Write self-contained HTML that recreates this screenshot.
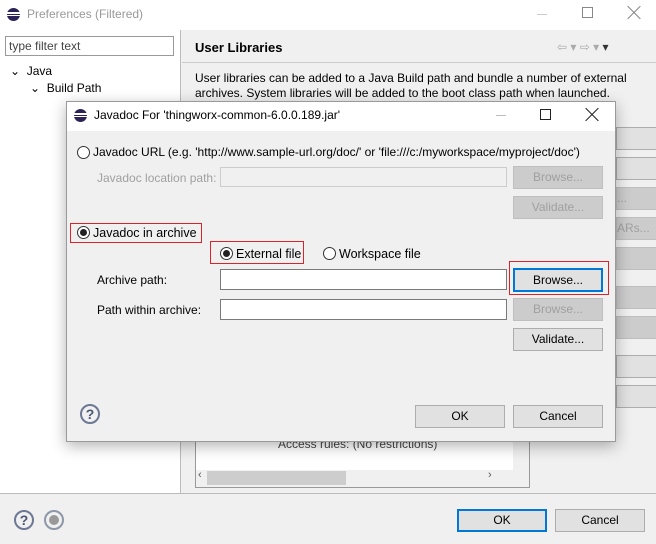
<!DOCTYPE html>
<html><head><style>
*{box-sizing:border-box;margin:0;padding:0}
body{width:656px;height:544px;position:relative;background:#f0f0f0;font-family:"Liberation Sans",sans-serif;font-size:12px;color:#000;overflow:hidden}
.a{position:absolute}
.btn{position:absolute;background:#e1e1e1;border:1px solid #adadad;text-align:center;line-height:21px;font-size:12px}
.dis{color:#a0a0a0;background:#cccccc;border-color:#bfbfbf}
.inp{position:absolute;background:#fff;border:1px solid #7a7a7a;height:22px}
.rad{position:absolute;width:13px;height:13px;border:1px solid #333;border-radius:50%;background:#fff}
.rad.on::after{content:"";position:absolute;left:2px;top:2px;width:7px;height:7px;border-radius:50%;background:#222}
.red{position:absolute;border:1px solid #d9242b}
.help{position:absolute;width:20px;height:20px;border:2px solid #6d7894;border-radius:50%;color:#4a5573;font-weight:bold;font-size:14px;text-align:center;line-height:17px}
.x{position:absolute;width:14px;height:14px}
.x::before,.x::after{content:"";position:absolute;left:-2px;top:6px;width:18px;height:1px;background:currentColor;transform:rotate(45deg)}
.x::after{transform:rotate(-45deg)}
</style></head><body>
<div class="a" style="left:0;top:0;width:656px;height:30px;background:#fff"></div>
<div class="a" style="left:7px;top:8px;width:13px;height:13px;border-radius:50%;background:#2c2255"><div class="a" style="left:0;top:4px;width:13px;height:2px;background:#fff"></div><div class="a" style="left:0;top:7px;width:13px;height:1px;background:#fff"></div></div>
<div class="a" style="left:27px;top:7px;color:#999;font-size:12px">Preferences (Filtered)</div>
<div class="a" style="left:537px;top:14px;width:10px;height:1px;background:#ccc"></div>
<div class="a" style="left:582px;top:7px;width:11px;height:11px;border:1px solid #888"></div>
<div class="x" style="left:627px;top:6px;color:#888"></div>
<div class="a" style="left:0;top:30px;width:181px;height:463px;background:#fff;border-right:1px solid #bbb"></div>
<div class="a" style="left:5px;top:36px;width:169px;height:20px;border:1px solid #999;background:#fff;padding:2px 3px;color:#444">type filter text</div>
<div class="a" style="left:10px;top:64px">⌄&nbsp; Java</div>
<div class="a" style="left:30px;top:81px">⌄&nbsp; Build Path</div>
<div class="a" style="left:195px;top:40px;font-weight:bold;font-size:13px">User Libraries</div>
<div class="a" style="left:557px;top:40px;color:#aaa;font-size:12px">⇦ ▾ ⇨ ▾ <span style="color:#333">▾</span></div>
<div class="a" style="left:182px;top:62px;width:474px;height:1px;background:#ccc"></div>
<div class="a" style="left:195px;top:71px;line-height:15px;font-size:12px">User libraries can be added to a Java Build path and bundle a number of external<br>archives. System libraries will be added to the boot class path when launched.</div>
<div class="btn" style="left:616px;top:127px;width:50px;height:23px"></div>
<div class="btn" style="left:616px;top:157px;width:50px;height:23px"></div>
<div class="btn dis" style="left:616px;top:187px;width:50px;height:23px;text-align:left">...</div>
<div class="btn dis" style="left:616px;top:217px;width:50px;height:23px;text-align:left">ARs...</div>
<div class="btn dis" style="left:616px;top:247px;width:50px;height:23px"></div>
<div class="btn dis" style="left:616px;top:286px;width:50px;height:23px"></div>
<div class="btn dis" style="left:616px;top:316px;width:50px;height:23px"></div>
<div class="btn" style="left:616px;top:355px;width:50px;height:23px"></div>
<div class="btn" style="left:616px;top:385px;width:50px;height:23px"></div>
<div class="a" style="left:195px;top:420px;width:335px;height:68px;background:#fff;border:1px solid #999"></div>
<div class="a" style="left:278px;top:437px;color:#444">Access rules: (No restrictions)</div>
<div class="a" style="left:513px;top:421px;width:16px;height:50px;background:#f0f0f0"></div>
<div class="a" style="left:196px;top:470px;width:333px;height:17px;background:#f0f0f0"></div>
<div class="a" style="left:207px;top:471px;width:139px;height:14px;background:#cdcdcd"></div>
<div class="a" style="left:198px;top:469px;color:#555;font-size:11px">‹</div>
<div class="a" style="left:488px;top:469px;color:#555;font-size:11px">›</div>
<div class="a" style="left:0;top:493px;width:656px;height:1px;background:#bbb"></div>
<div class="help" style="left:14px;top:510px">?</div>
<div class="a" style="left:44px;top:510px;width:20px;height:20px;border:2px solid #8e97aa;border-radius:50%"><div class="a" style="left:3px;top:3px;width:10px;height:10px;border-radius:50%;background:#999"></div></div>
<div class="btn" style="left:457px;top:509px;width:90px;height:23px;border:2px solid #0078d7;line-height:19px">OK</div>
<div class="btn" style="left:555px;top:509px;width:90px;height:23px">Cancel</div>
<div class="a" style="left:66px;top:101px;width:550px;height:341px;background:#f0f0f0;border:1px solid #9a9a9a;box-shadow:0 4px 14px rgba(0,0,0,.3)"></div>
<div class="a" style="left:67px;top:102px;width:548px;height:29px;background:#fff"></div>
<div class="a" style="left:74px;top:109px;width:13px;height:13px;border-radius:50%;background:#2c2255"><div class="a" style="left:0;top:4px;width:13px;height:2px;background:#fff"></div><div class="a" style="left:0;top:7px;width:13px;height:1px;background:#fff"></div></div>
<div class="a" style="left:94px;top:108px">Javadoc For 'thingworx-common-6.0.0.189.jar'</div>
<div class="a" style="left:496px;top:115px;width:10px;height:1px;background:#bbb"></div>
<div class="a" style="left:540px;top:109px;width:11px;height:11px;border:1px solid #222"></div>
<div class="x" style="left:585px;top:108px;color:#222"></div>
<div class="rad" style="left:77px;top:146px"></div>
<div class="a" style="left:93px;top:145px;font-size:12px">Javadoc URL (e.g. 'http://www.sample-url.org/doc/' or 'file:///c:/myworkspace/myproject/doc')</div>
<div class="a" style="left:97px;top:171px;color:#a0a0a0">Javadoc location path:</div>
<div class="inp" style="left:220px;top:167px;width:287px;height:20px;border-color:#ccc;background:#f0f0f0"></div>
<div class="btn dis" style="left:513px;top:166px;width:90px;height:23px">Browse...</div>
<div class="btn dis" style="left:513px;top:196px;width:90px;height:23px">Validate...</div>
<div class="red" style="left:70px;top:223px;width:132px;height:20px"></div>
<div class="rad on" style="left:77px;top:226px"></div>
<div class="a" style="left:93px;top:226px;font-size:12.5px">Javadoc in archive</div>
<div class="red" style="left:210px;top:241px;width:94px;height:23px"></div>
<div class="rad on" style="left:220px;top:247px"></div>
<div class="a" style="left:236px;top:247px;font-size:12.5px">External file</div>
<div class="rad" style="left:323px;top:247px"></div>
<div class="a" style="left:339px;top:247px;font-size:12.5px">Workspace file</div>
<div class="a" style="left:97px;top:273px">Archive path:</div>
<div class="inp" style="left:220px;top:269px;width:287px;height:21px"></div>
<div class="red" style="left:509px;top:261px;width:100px;height:34px"></div>
<div class="btn" style="left:513px;top:268px;width:90px;height:24px;border:2px solid #0078d7;line-height:20px">Browse...</div>
<div class="a" style="left:97px;top:303px">Path within archive:</div>
<div class="inp" style="left:220px;top:299px;width:287px;height:21px"></div>
<div class="btn dis" style="left:513px;top:298px;width:90px;height:23px">Browse...</div>
<div class="btn" style="left:513px;top:328px;width:90px;height:23px">Validate...</div>
<div class="help" style="left:80px;top:404px">?</div>
<div class="btn" style="left:415px;top:405px;width:90px;height:23px">OK</div>
<div class="btn" style="left:513px;top:405px;width:90px;height:23px">Cancel</div>
</body></html>
